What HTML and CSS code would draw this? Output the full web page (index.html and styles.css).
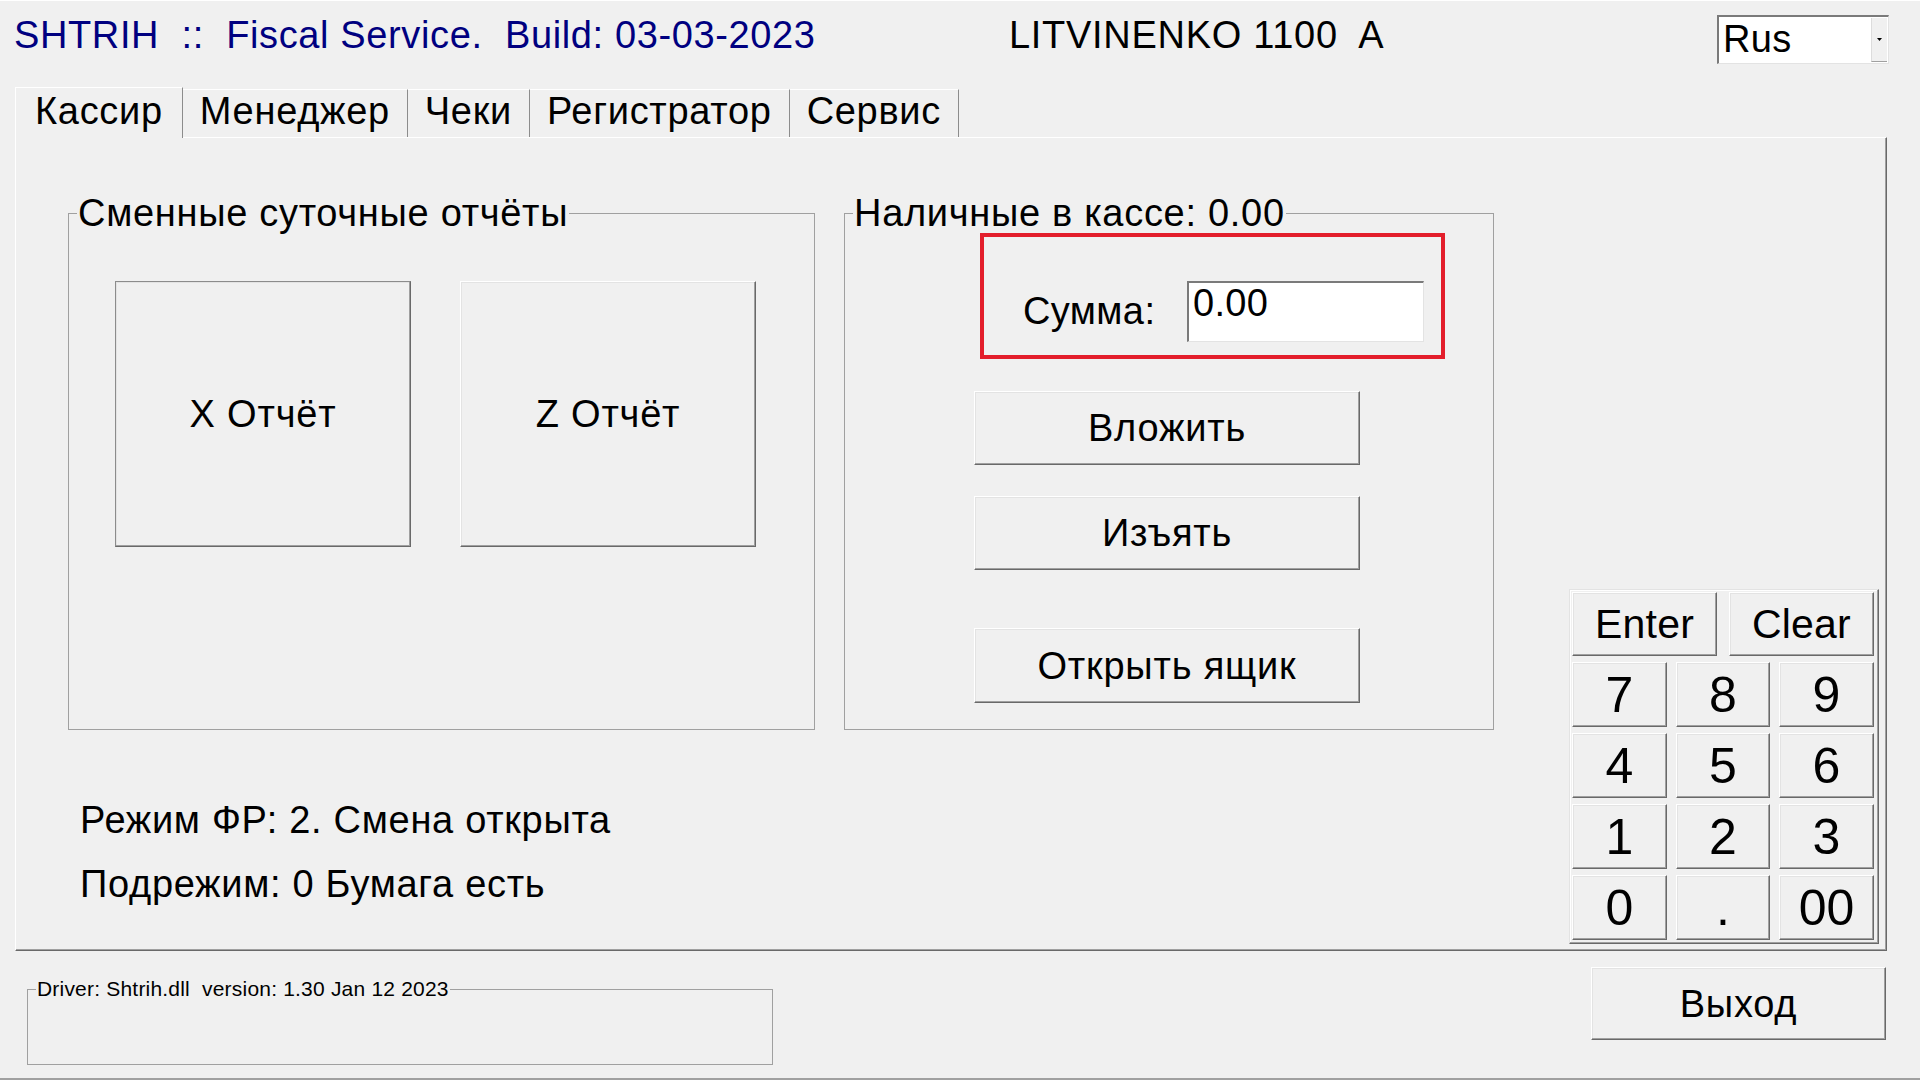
FILE: index.html
```html
<!DOCTYPE html>
<html lang="ru">
<head>
<meta charset="utf-8">
<title>SHTRIH :: Fiscal Service</title>
<link rel="stylesheet" href="styles.css">
</head>
<body>
<div class="window">
  <header class="header">
    <div class="title">SHTRIH  ::  Fiscal Service.  Build: 03-03-2023</div>
    <div class="device">LITVINENKO 1100  A</div>
    <div class="combo">
      <span class="combo-text">Rus</span>
      <span class="combo-btn"><svg width="5" height="3" viewBox="0 0 5 3"><path d="M0 0h5L2.5 3z" fill="#000"/></svg></span>
    </div>
  </header>

  <nav class="tabs">
    <div class="tab active">Кассир</div>
    <div class="tab">Менеджер</div>
    <div class="tab">Чеки</div>
    <div class="tab">Регистратор</div>
    <div class="tab">Сервис</div>
  </nav>

  <section class="panel">
    <div class="left-col">
      <div class="groups">
        <fieldset class="group g-reports">
          <legend>Сменные суточные отчёты</legend>
          <div class="report-btns">
            <button class="btn report focused">X Отчёт</button>
            <button class="btn report">Z Отчёт</button>
          </div>
        </fieldset>
        <fieldset class="group g-cash">
          <legend>Наличные в кассе: 0.00</legend>
          <div class="sum-box">
            <span class="sum-label">Сумма:</span>
            <div class="sum-input">0.00</div>
          </div>
          <button class="btn cash-btn b1">Вложить</button>
          <button class="btn cash-btn b2">Изъять</button>
          <button class="btn cash-btn b3">Открыть ящик</button>
        </fieldset>
      </div>
      <div class="status">
        <div>Режим ФР: 2. Смена открыта</div>
        <div>Подрежим: 0 Бумага есть</div>
      </div>
    </div>

    <div class="keypad">
      <div class="kp-top">
        <button class="btn kbtn wide">Enter</button>
        <button class="btn kbtn wide">Clear</button>
      </div>
      <div class="kp-grid">
        <button class="btn kbtn digit">7</button>
        <button class="btn kbtn digit">8</button>
        <button class="btn kbtn digit">9</button>
        <button class="btn kbtn digit">4</button>
        <button class="btn kbtn digit">5</button>
        <button class="btn kbtn digit">6</button>
        <button class="btn kbtn digit">1</button>
        <button class="btn kbtn digit">2</button>
        <button class="btn kbtn digit">3</button>
        <button class="btn kbtn digit">0</button>
        <button class="btn kbtn digit">.</button>
        <button class="btn kbtn digit">00</button>
      </div>
    </div>
  </section>

  <footer class="footer">
    <fieldset class="driver">
      <legend>Driver: Shtrih.dll  version: 1.30 Jan 12 2023</legend>
    </fieldset>
    <button class="btn exit">Выход</button>
  </footer>
</div>
</body>
</html>
```

FILE: styles.css
```css
* {
  box-sizing: border-box;
}

html, body {
  margin: 0;
  padding: 0;
}

body {
  width: 1920px;
  height: 1080px;
  overflow: hidden;
  background: #f0f0f0;
  font-family: "Liberation Sans", Arial, sans-serif;
  font-size: 38px;
  letter-spacing: 0.7px;
  color: #000;
}

.window {
  height: 1080px;
  display: flex;
  flex-direction: column;
  border-top: 1px solid #ffffff;
  border-bottom: 2px solid #a0a0a0;
}

/* ---------- header ---------- */
.header {
  display: flex;
  align-items: flex-start;
  height: 86px;
  padding-left: 14px;
  flex: none;
}

.title {
  width: 995px;
  margin-top: 12px;
  line-height: 44px;
  color: #000080;
  letter-spacing: 0.62px;
  white-space: pre;
}

.device {
  margin-top: 12px;
  line-height: 44px;
  white-space: pre;
}

.combo {
  margin: 14px 31px 0 auto;
  width: 172px;
  height: 49px;
  display: flex;
  background: #ffffff;
  border-style: solid;
  border-width: 2px 1px 1px 2px;
  border-color: #7a7a7a #e3e3e3 #e3e3e3 #7a7a7a;
}

.combo-text {
  flex: 1;
  padding-left: 4px;
  line-height: 44px;
  letter-spacing: 0.3px;
}

.combo-btn {
  width: 16px;
  margin: 1px 1px 1px 0;
  background: #f0f0f0;
  border-left: 1px solid #dcdcdc;
  border-bottom: 1px solid #a0a0a0;
  display: flex;
  align-items: center;
  justify-content: center;
}

/* ---------- tabs ---------- */
.tabs {
  display: flex;
  align-items: flex-start;
  height: 51px;
  margin-bottom: -1px;
  padding-left: 15px;
  position: relative;
  z-index: 1;
  flex: none;
}

.tab {
  margin-top: 2px;
  height: 48px;
  line-height: 42px;
  padding: 0 17px;
  border-top: 1px solid #ffffff;
  border-right: 1px solid #8c8c8c;
  white-space: nowrap;
}

.tab.active {
  margin-top: 0;
  height: 51px;
  line-height: 46px;
  padding: 0 19px;
  border-left: 1px solid #ffffff;
  background: #f0f0f0;
}

/* ---------- panel ---------- */
.panel {
  flex: none;
  display: flex;
  margin-left: 15px;
  width: 1872px;
  height: 814px;
  border-top: 1px solid #ffffff;
  border-left: 1px solid #ffffff;
  border-right: 1px solid #696969;
  border-bottom: 1px solid #696969;
  box-shadow: inset -1px -1px 0 #a0a0a0;
}

.left-col {
  padding: 56px 0 0 52px;
}

.groups {
  display: flex;
  gap: 29px;
}

.group {
  margin: 0;
  padding: 0;
  min-width: 0;
  height: 536px;
  border: 1px solid #a0a0a0;
}

.group legend,
.driver legend {
  margin-left: 8px;
  padding: 0 1px;
  line-height: 38px;
  white-space: pre;
}

.g-reports {
  width: 747px;
}

.g-cash {
  width: 650px;
}

/* ---------- buttons ---------- */
.btn {
  font-family: inherit;
  font-size: 38px;
  letter-spacing: 0.8px;
  color: #000;
  background: #f0f0f0;
  margin: 0;
  padding: 0;
  display: flex;
  align-items: center;
  justify-content: center;
  line-height: 1;
  border: 1px solid;
  border-color: #ffffff #696969 #696969 #ffffff;
  box-shadow: inset -1px -1px 0 #a0a0a0, inset 1px 1px 0 #e3e3e3;
}

.btn.focused {
  border-color: #8c8c8c #696969 #696969 #8c8c8c;
}

.report-btns {
  display: flex;
  gap: 49px;
  margin: 49px 0 0 46px;
}

.report {
  width: 296px;
  height: 266px;
}

.sum-box {
  margin: 1px 0 0 135px;
  width: 465px;
  height: 126px;
  border: 4px solid #e31e2b;
  display: flex;
  align-items: flex-start;
}

.sum-label {
  margin: 52px 0 0 39px;
  line-height: 44px;
  letter-spacing: 0.4px;
}

.sum-input {
  margin: 44px 17px 0 auto;
  width: 237px;
  height: 61px;
  padding-left: 4px;
  line-height: 40px;
  letter-spacing: 0.3px;
  background: #ffffff;
  border-style: solid;
  border-width: 2px 1px 1px 2px;
  border-color: #7a7a7a #e3e3e3 #e3e3e3 #7a7a7a;
}

.cash-btn {
  width: 386px;
  height: 74px;
  margin-left: 129px;
}

.b1 {
  margin-top: 32px;
}

.b2 {
  margin-top: 31px;
}

.b3 {
  margin-top: 58px;
  height: 75px;
}

.status {
  margin: 58px 0 0 12px;
  line-height: 64px;
  white-space: nowrap;
}

/* ---------- keypad ---------- */
.keypad {
  align-self: flex-end;
  margin: 0 7px 6px auto;
  width: 310px;
  height: 355px;
  padding: 2px 4px 3px 2px;
  border: 1px solid;
  border-color: #e3e3e3 #696969 #696969 #e3e3e3;
  box-shadow: inset -1px -1px 0 #a0a0a0, inset 1px 1px 0 #ffffff;
}

.kp-top {
  display: flex;
  gap: 12px;
}

.kbtn.wide {
  width: 145px;
  height: 64px;
  font-size: 41px;
  letter-spacing: 0.2px;
}

.kp-grid {
  margin-top: 6px;
  display: grid;
  grid-template-columns: 95px 94px 95px;
  grid-auto-rows: 65px;
  column-gap: 9px;
  row-gap: 6px;
}

.kbtn.digit {
  font-size: 50px;
  letter-spacing: 0;
}

/* ---------- footer ---------- */
.footer {
  flex: 1;
  display: flex;
  align-items: flex-start;
  padding-left: 27px;
}

.driver {
  margin: 26px 0 0 0;
  padding: 0;
  min-width: 0;
  width: 746px;
  height: 88px;
  border: 1px solid #a0a0a0;
}

.driver legend {
  font-size: 21px;
  line-height: 24px;
  letter-spacing: 0.2px;
}

.exit {
  margin: 16px 34px 0 auto;
  width: 295px;
  height: 73px;
}
```
